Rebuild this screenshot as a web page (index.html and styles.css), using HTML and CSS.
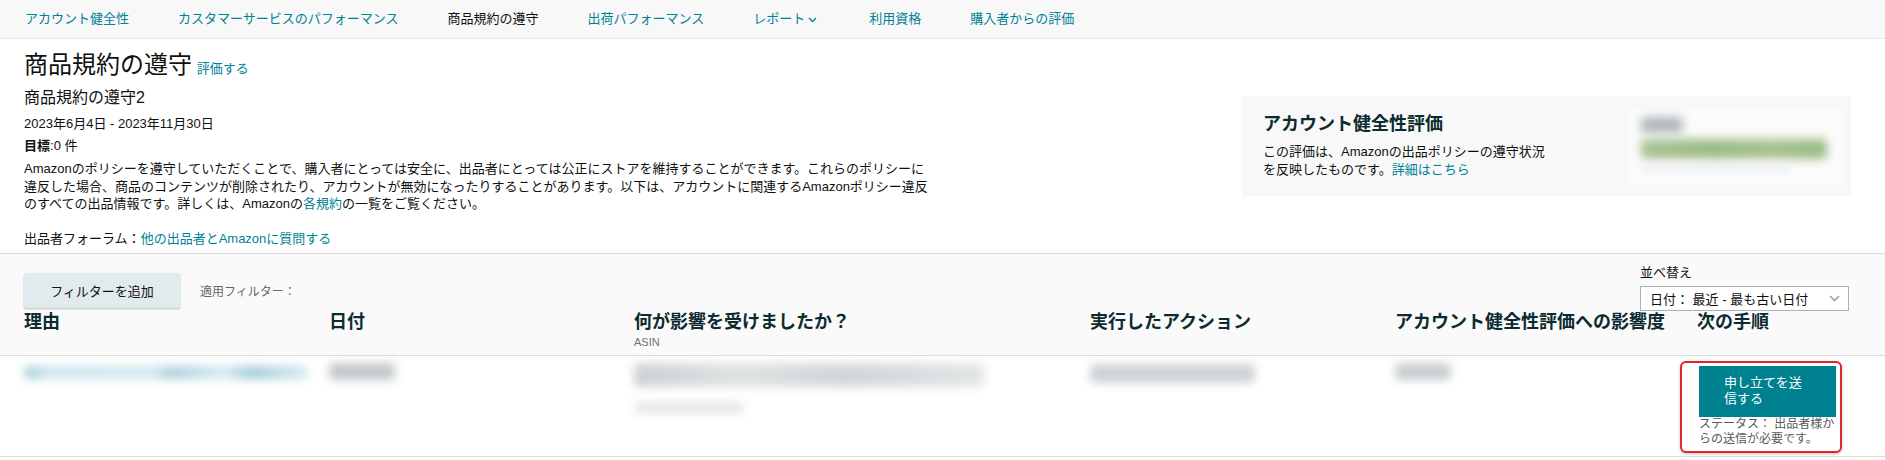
FILE: index.html
```html
<!DOCTYPE html>
<html lang="ja">
   <head>
      <meta charset="UTF-8" />
      <title>商品規約の遵守</title>
      <link rel="stylesheet" href="styles.css">
   </head>
   <body>
      <nav class="tabs">
         <a class="tab">アカウント健全性</a>
         <a class="tab">カスタマーサービスのパフォーマンス</a>
         <a class="tab active">商品規約の遵守</a>
         <a class="tab">出荷パフォーマンス</a>
         <a class="tab">レポート<svg class="chev" width="9" height="6" viewBox="0 0 9 6"><path d="M1 1l3.5 3.5L8 1" fill="none" stroke="currentColor" stroke-width="1.3"/></svg></a>
         <a class="tab">利用資格</a>
         <a class="tab">購入者からの評価</a>
      </nav>

      <section class="summary">
         <div class="intro">
            <h1 class="page-title">商品規約の遵守 <a class="link small">評価する</a></h1>
            <div class="subtitle">商品規約の遵守2</div>
            <div class="period">2023年6月4日 - 2023年11月30日</div>
            <div class="goal"><b>目標</b>:0 件</div>
            <p class="lead">Amazonのポリシーを遵守していただくことで、購入者にとっては安全に、出品者にとっては公正にストアを維持することができます。これらのポリシーに違反した場合、商品のコンテンツが削除されたり、アカウントが無効になったりすることがあります。以下は、アカウントに関連するAmazonポリシー違反のすべての出品情報です。詳しくは、Amazonの<a class="link">各規約</a>の一覧をご覧ください。</p>
            <div class="forum">出品者フォーラム：<a class="link">他の出品者とAmazonに質問する</a></div>
         </div>
         <div class="health-card">
            <div class="health-text">
               <h2 class="health-title">アカウント健全性評価</h2>
               <p class="health-desc">この評価は、Amazonの出品ポリシーの遵守状況を反映したものです。<a class="link">詳細はこちら</a></p>
            </div>
            <div class="health-meter">
               <span class="blur meter-label"></span>
               <span class="blur meter-bar"></span>
               <span class="blur meter-foot"></span>
            </div>
         </div>
      </section>

      <section class="violations">
         <div class="toolbar">
            <div class="filters">
               <button class="btn-filter">フィルターを追加</button>
               <span class="applied">適用フィルター：</span>
            </div>
            <div class="sort">
               <label class="sort-label">並べ替え</label>
               <div class="select">
                  <span>日付： 最近 - 最も古い日付</span>
                  <svg width="11" height="7" viewBox="0 0 11 7"><path d="M1 1l4.5 4.5L10 1" fill="none" stroke="#8c9596" stroke-width="1.3"/></svg>
               </div>
            </div>
         </div>

         <div class="grid head">
            <div class="th">理由</div>
            <div class="th">日付</div>
            <div class="th">何が影響を受けましたか？<div class="th-sub">ASIN</div></div>
            <div class="th">実行したアクション</div>
            <div class="th">アカウント健全性評価への影響度</div>
            <div class="th">次の手順</div>
         </div>

         <div class="grid row">
            <div class="td"><span class="blur b-link"></span></div>
            <div class="td"><span class="blur b-date"></span></div>
            <div class="td">
               <span class="blur b-asin1"></span>
               <span class="blur b-asin2"></span>
            </div>
            <div class="td"><span class="blur b-action"></span></div>
            <div class="td"><span class="blur b-impact"></span></div>
            <div class="td">
               <div class="annot">
                  <button class="btn-appeal">申し立てを送信する</button>
                  <div class="status">ステータス： 出品者様からの送信が必要です。</div>
               </div>
            </div>
         </div>
      </section>
   </body>
</html>
```

FILE: styles.css
```css
body {
margin: 0;
font-family: "Liberation Sans", "Noto Sans CJK JP", sans-serif;
font-size: 13px;
color: #0f1111;
background: #fff;
}
a {
cursor: pointer;
}
.link {
color: #008296;
}
.tabs {
display: flex;
align-items: center;
gap: 49px;
height: 38px;
padding-left: 25px;
background: #f8f8f8;
border-bottom: 1px solid #e7e7e7;
}
.tab {
color: #008296;
font-size: 13px;
line-height: 18px;
display: flex;
align-items: center;
}
.tab.active {
color: #0f1111;
}
.chev {
margin: 1px 3px 0 3px;
}
.summary {
display: flex;
justify-content: space-between;
align-items: center;
padding-right: 34px;
border-bottom: 1px solid #dcdcdc;
}
.intro {
padding: 11px 0 5px 24px;
width: 910px;
margin-right: 10px;
}
.page-title {
margin: 0;
font-size: 24px;
line-height: 30px;
font-weight: normal;
color: #0f1111;
}
.page-title .small {
font-size: 13px;
margin-left: -2px;
}
.subtitle {
margin-top: 3px;
font-size: 16px;
line-height: 22px;
}
.period {
margin-top: 6px;
line-height: 18px;
}
.goal {
margin-top: 4px;
line-height: 18px;
}
.lead {
margin: 5px 0 0 0;
line-height: 17.5px;
}
.forum {
margin-top: 17.5px;
line-height: 18px;
}
.health-card {
display: flex;
justify-content: space-between;
align-items: center;
width: 609px;
height: 100px;
box-sizing: border-box;
padding: 0 7px 0 21px;
background: #f8f8f8;
}
.health-text {
width: 285px;
}
.health-title {
margin: 0;
font-size: 18px;
line-height: 22px;
font-weight: bold;
color: #0c2b30;
}
.health-desc {
margin: 8px 0 0 0;
line-height: 18px;
}
.health-meter {
display: flex;
flex-direction: column;
gap: 6px;
width: 214px;
height: 75px;
padding: 8px 0 0 11px;
box-sizing: border-box;
background: #fbfbfb;
}
.blur {
display: block;
filter: blur(5px);
border-radius: 5px;
}
.meter-label {
width: 42px;
height: 16px;
background: #b0b8bb;
}
.meter-bar {
width: 186px;
height: 20px;
background: linear-gradient(90deg, #a9c394 0%, #9cbb85 40%, #a6c291 70%, #9aba84 100%);
}
.meter-foot {
width: 150px;
height: 6px;
background: #e9ecec;
}
.violations {
background: #fafafa;
}
.toolbar {
display: flex;
justify-content: space-between;
align-items: flex-end;
padding: 10px 36px 0 24px;
}
.filters {
display: flex;
align-items: center;
gap: 20px;
margin-bottom: 3px;
}
.btn-filter {
width: 156px;
height: 35px;
border: none;
border-radius: 2px;
background: #e1eaec;
box-shadow: 0 1px 2px rgba(0, 0, 0, 0.25);
font-family: inherit;
font-size: 13px;
color: #0f1111;
}
.applied {
font-size: 12px;
color: #666;
}
.sort {
display: flex;
flex-direction: column;
gap: 5px;
width: 209px;
}
.sort-label {
font-size: 13px;
line-height: 17px;
}
.select {
display: flex;
justify-content: space-between;
align-items: center;
height: 25px;
box-sizing: border-box;
padding: 0 8px 0 9px;
background: #fff;
border: 1px solid #aab4b5;
font-size: 13px;
}
.grid {
display: grid;
grid-template-columns: 305px 305px 456px 305px 302px 1fr;
padding: 0 24px;
}
.head {
padding-bottom: 6px;
border-bottom: 1px solid #dcdcdc;
}
.th {
font-size: 18px;
line-height: 22px;
font-weight: bold;
color: #0c2b30;
}
.th-sub {
margin-top: 2px;
font-size: 11px;
line-height: 14px;
font-weight: normal;
color: #6f7373;
}
.row {
background: #fff;
height: 100px;
border-bottom: 1px solid #dcdcdc;
}
.td {
padding-top: 10px;
}
.b-link {
width: 285px;
height: 13px;
background: linear-gradient(90deg, #9ccbd7 0%, #cfe5ec 8%, #d3e8ee 45%, #a9d0da 52%, #d6eaef 70%, #a2ccd7 80%, #d8ebf0 100%);
}
.b-date {
width: 66px;
height: 17px;
margin-top: -3px;
background: #c3c8ca;
}
.b-asin1 {
width: 350px;
height: 24px;
margin-top: -3px;
background: linear-gradient(90deg, #ccd1d3 0%, #e0e3e4 30%, #d2d6d8 60%, #e3e6e7 100%);
}
.b-asin2 {
width: 110px;
height: 11px;
margin-top: 15px;
background: #e2e5e6;
}
.b-action {
width: 165px;
height: 19px;
margin-top: -2px;
background: #cfd3d5;
}
.b-impact {
width: 56px;
height: 17px;
margin-top: -3px;
background: #c8cdcf;
}
.annot {
width: 140px;
margin: -5px 0 0 -17px;
padding: 3px 1px 5px 17px;
border: 2px solid #e4262a;
border-radius: 6px;
box-shadow: 0 1px 3px rgba(0, 0, 0, 0.25);
background: #fff;
}
.btn-appeal {
display: block;
width: 137px;
padding: 9px 25px 10px 25px;
border: none;
background: #008190;
color: #fff;
font-family: inherit;
font-size: 13px;
line-height: 16px;
text-align: left;
}
.status {
font-size: 12px;
line-height: 14.5px;
color: #565959;
}
```
